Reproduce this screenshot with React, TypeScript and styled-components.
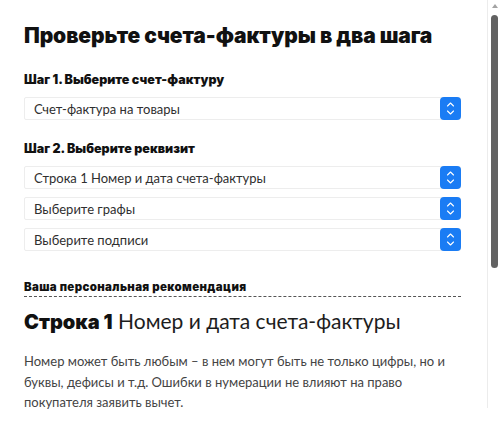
import React from 'react'
import styled, { createGlobalStyle } from 'styled-components'

const GlobalStyle = createGlobalStyle`
    html, body {
        margin: 0;
        padding: 0;
        background: #fff;
    }
    body {
        font-family: "Lato", "Open Sans", sans-serif;
        color: #1d1d1d;
    }
`

function SelectField({ value }: { value: string }) {
    return (
        <SelectBox>
            <SelectValue>{value}</SelectValue>
            <SelectButton>
                <svg width="9" height="15" viewBox="0 0 9 15" fill="none">
                    <path d="M1.5 5 L4.5 2 L7.5 5" stroke="#fff" strokeWidth="1.1" strokeLinecap="round" strokeLinejoin="round" />
                    <path d="M1.5 10 L4.5 13 L7.5 10" stroke="#fff" strokeWidth="1.1" strokeLinecap="round" strokeLinejoin="round" />
                </svg>
            </SelectButton>
        </SelectBox>
    )
}

function App() {
    return (
        <>
            <GlobalStyle />
            <Frame>
                <Content>
                    <Title>Проверьте счета-фактуры в два шага</Title>

                    <StepLabel>Шаг 1. Выберите счет-фактуру</StepLabel>
                    <SelectGroup>
                        <SelectField value="Счет-фактура на товары" />
                    </SelectGroup>

                    <StepLabel>Шаг 2. Выберите реквизит</StepLabel>
                    <SelectGroup>
                        <SelectField value="Строка 1 Номер и дата счета-фактуры" />
                        <SelectField value="Выберите графы" />
                        <SelectField value="Выберите подписи" />
                    </SelectGroup>

                    <RecommendLabel>Ваша персональная рекомендация</RecommendLabel>
                    <RowTitle>
                        <strong>Строка 1</strong> Номер и дата счета-фактуры
                    </RowTitle>
                    <Paragraph>
                        Номер может быть любым – в нем могут быть не только цифры, но и
                        буквы, дефисы и т.д. Ошибки в нумерации не влияют на право
                        покупателя заявить вычет.
                    </Paragraph>
                </Content>
                <ScrollTrack>
                    <ScrollArrow />
                    <ScrollThumb />
                </ScrollTrack>
            </Frame>
        </>
    )
}

export default App

const Frame = styled.div`
    display: flex;
    align-items: flex-start;
    width: 500px;
`

const Content = styled.div`
    flex: 1;
    padding: 22px 26px 0 24px;
`

const Title = styled.h1`
    margin: 0 0 22px;
    font-family: "Inter", sans-serif;
    font-size: 21px;
    font-weight: 900;
    line-height: 28px;
    letter-spacing: -0.1px;
    color: #111;
`

const StepLabel = styled.h3`
    margin: 0 0 9px;
    font-family: "Inter", sans-serif;
    font-size: 12.5px;
    font-weight: 900;
    line-height: 16px;
    color: #111;
`

const SelectGroup = styled.div`
    display: flex;
    flex-direction: column;
    gap: 8px;
    margin-bottom: 21px;
`

const SelectBox = styled.div`
    display: flex;
    align-items: center;
    height: 23px;
    border: 1px solid #ededed;
    border-radius: 2px;
    box-sizing: border-box;
`

const SelectValue = styled.span`
    flex: 1;
    padding-left: 9px;
    font-size: 13px;
    color: #2f2f2f;
    white-space: nowrap;
`

const SelectButton = styled.div`
    display: flex;
    align-items: center;
    justify-content: center;
    width: 21px;
    height: 23px;
    margin-right: -1px;
    border-radius: 4px;
    background: #1a7cf4;
`

const RecommendLabel = styled.div`
    margin-top: 29px;
    padding-bottom: 2px;
    border-bottom: 1px dashed #555;
    font-family: "Inter", sans-serif;
    font-size: 11.5px;
    font-weight: 900;
    line-height: 14px;
    letter-spacing: 0.35px;
    color: #111;
`

const RowTitle = styled.h2`
    margin: 10px 0 15px;
    font-size: 21px;
    font-weight: 400;
    line-height: 28px;
    color: #1d1d1d;

    > strong {
        font-family: "Inter", sans-serif;
        font-weight: 900;
        font-size: 20px;
        color: #111;
    }
`

const Paragraph = styled.p`
    margin: 0;
    font-size: 13px;
    line-height: 20.5px;
    color: #444;
`

const ScrollTrack = styled.div`
    width: 13px;
    height: 408px;
    border-left: 1px solid #ececec;
    box-sizing: border-box;
    display: flex;
    flex-direction: column;
    align-items: center;
    padding-top: 4px;
`

const ScrollArrow = styled.div`
    width: 0;
    height: 0;
    border-left: 3.5px solid transparent;
    border-right: 3.5px solid transparent;
    border-bottom: 4px solid #a3a3a3;
    margin-left: 1px;
`

const ScrollThumb = styled.div`
    width: 7px;
    height: 253px;
    margin-top: 7px;
    margin-left: 1px;
    border-radius: 4px;
    background: #626262;
`
